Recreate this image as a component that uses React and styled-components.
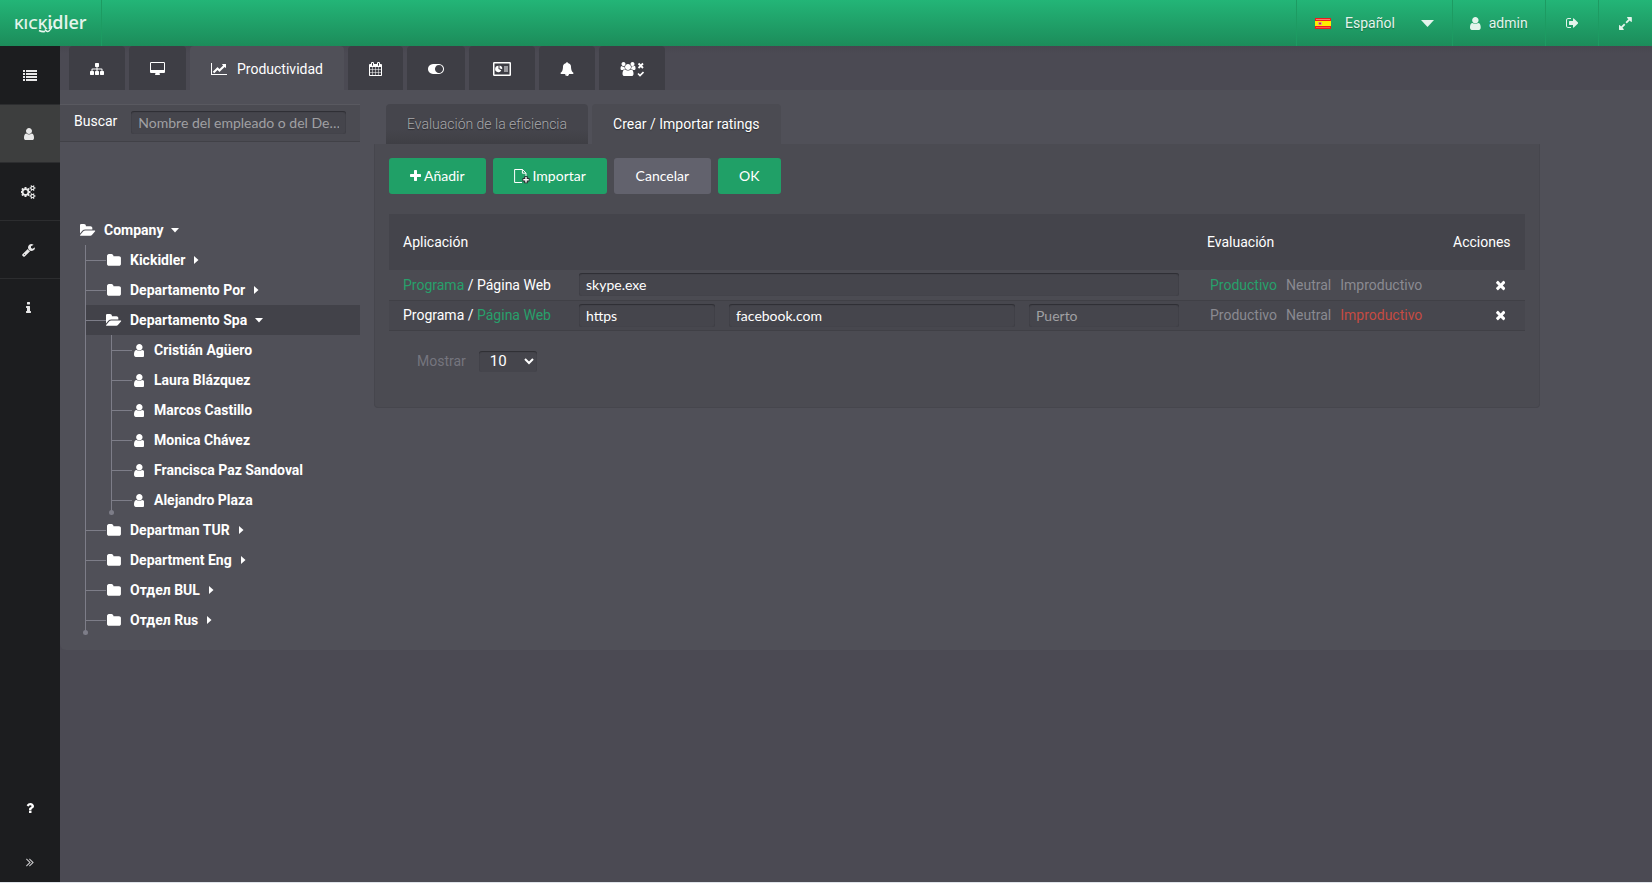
import React, { useState } from 'react';
import styled, { createGlobalStyle } from 'styled-components';

const GlobalStyle = createGlobalStyle`
  * {
    box-sizing: border-box;
  }
  body {
    margin: 0;
    background: #dfe4ea;
    color: #fff;
    font-family: Roboto, "Liberation Sans", sans-serif;
    font-size: 14px;
    line-height: 20px;
  }
  button, input, select {
    font: inherit;
    color: inherit;
  }
  button {
    padding: 0;
    border: none;
    background: none;
    cursor: pointer;
  }
  ul {
    margin: 0;
    padding: 0;
    list-style: none;
  }
  a {
    color: inherit;
    text-decoration: none;
  }
`;

// x offset, width and path of each glyph, all of them 1792 units high
const glyphs = {
  user: [256, 1280, "M1536 1399q0 109-62.5 187t-150.5 78h-854q-88 0-150.5-78t-62.5-187q0-85 8.5-160.5t31.5-152 58.5-131 94-89 134.5-34.5q131 128 313 128t313-128q76 0 134.5 34.5t94 89 58.5 131 31.5 152 8.5 160.5zm-256-887q0 159-112.5 271.5t-271.5 112.5-271.5-112.5-112.5-271.5 112.5-271.5 271.5-112.5 271.5 112.5 112.5 271.5z"],
  folder: [64, 1664, "M1728 608v704q0 92-66 158t-158 66h-1216q-92 0-158-66t-66-158v-960q0-92 66-158t158-66h320q92 0 158 66t66 158v32h672q92 0 158 66t66 158z"],
  folderOpen: [0, 1820, "M1815 952q0 31-31 66l-336 396q-43 51-120.5 86.5t-143.5 35.5h-1088q-34 0-60.5-13t-26.5-43q0-31 31-66l336-396q43-51 120.5-86.5t143.5-35.5h1088q34 0 60.5 13t26.5 43zm-343-344v160h-832q-94 0-197 47.5t-164 119.5l-337 396-5 6q0-4-.5-12.5t-.5-12.5v-960q0-92 66-158t158-66h320q92 0 158 66t66 158v32h544q92 0 158 66t66 158z"],
  times: [300, 1192, "M1490 1322q0 40-28 68l-136 136q-28 28-68 28t-68-28l-294-294-294 294q-28 28-68 28t-68-28l-136-136q-28-28-28-68t28-68l294-294-294-294q-28-28-28-68t28-68l136-136q28-28 68-28t68 28l294 294 294-294q28-28 68-28t68 28l136 136q28 28 28 68t-28 68l-294 294 294 294q28 28 28 68z"],
  plus: [192, 1408, "M1600 736v192q0 40-28 68t-68 28h-416v416q0 40-28 68t-68 28h-192q-40 0-68-28t-28-68v-416h-416q-40 0-68-28t-28-68v-192q0-40 28-68t68-28h416v-416q0-40 28-68t68-28h192q40 0 68 28t28 68v416h416q40 0 68 28t28 68z"],
  list: [0, 1792, "M0 256h256v256h-256zM384 256h1408v256h-1408zM0 640h256v256h-256zM384 640h1408v256h-1408zM0 1024h256v256h-256zM384 1024h1408v256h-1408zM0 1408h256v256h-256zM384 1408h1408v256h-1408z"],
  sitemap: [0, 1792, "M1792 1248v320q0 40-28 68t-68 28h-320q-40 0-68-28t-28-68v-320q0-40 28-68t68-28h96v-192h-512v192h96q40 0 68 28t28 68v320q0 40-28 68t-68 28h-320q-40 0-68-28t-28-68v-320q0-40 28-68t68-28h96v-192h-512v192h96q40 0 68 28t28 68v320q0 40-28 68t-68 28h-320q-40 0-68-28t-28-68v-320q0-40 28-68t68-28h96v-192q0-52 38-90t90-38h512v-192h-96q-40 0-68-28t-28-68v-320q0-40 28-68t68-28h320q40 0 68 28t28 68v320q0 40-28 68t-68 28h-96v192h512q52 0 90 38t38 90v192h96q40 0 68 28t28 68z"],
  desktop: [-64, 1920, "M1728 992v-832q0-13-9.5-22.5t-22.5-9.5h-1600q-13 0-22.5 9.5t-9.5 22.5v832q0 13 9.5 22.5t22.5 9.5h1600q13 0 22.5-9.5t9.5-22.5zm128-832v1088q0 66-47 113t-113 47h-544q0 37 16 77.5t32 71 16 43.5q0 26-19 45t-45 19h-512q-26 0-45-19t-19-45q0-14 16-44t32-70 16-78h-544q-66 0-113-47t-47-113v-1088q0-66 47-113t113-47h1600q66 0 113 47t47 113z"],
  chart: [0, 2048, "M2048 1536v128h-2048v-1536h128v1408h1920zm-128-1248v435q0 21-19.5 29.5t-35.5-7.5l-121-121-633 633q-10 10-23 10t-23-10l-233-233-416 416-192-192 585-585q10-10 23-10t23 10l233 233 464-464-121-121q-16-16-7.5-35.5t29.5-19.5h435q14 0 23 9t9 23z"],
  calendar: [64, 1664, "M192 1664h288v-288h-288v288zm352 0h320v-288h-320v288zm-352-352h288v-320h-288v320zm352 0h320v-320h-320v320zm-352-384h288v-288h-288v288zm736 736h320v-288h-320v288zm-384-736h320v-288h-320v288zm768 736h288v-288h-288v288zm-384-352h320v-320h-320v320zm-352-864v-288q0-13-9.5-22.5t-22.5-9.5h-64q-13 0-22.5 9.5t-9.5 22.5v288q0 13 9.5 22.5t22.5 9.5h64q13 0 22.5-9.5t9.5-22.5zm736 864h288v-320h-288v320zm-384-384h320v-288h-320v288zm384 0h288v-288h-288v288zm32-480v-288q0-13-9.5-22.5t-22.5-9.5h-64q-13 0-22.5 9.5t-9.5 22.5v288q0 13 9.5 22.5t22.5 9.5h64q13 0 22.5-9.5t9.5-22.5zm384-64v1280q0 52-38 90t-90 38h-1408q-52 0-90-38t-38-90v-1280q0-52 38-90t90-38h128v-96q0-66 47-113t113-47h64q66 0 113 47t47 113v96h384v-96q0-66 47-113t113-47h64q66 0 113 47t47 113v96h128q52 0 90 38t38 90z"],
  toggle: [0, 2048, "M0 896q0-130 51-248.5t136.5-204 204-136.5 248.5-51h768q130 0 248.5 51t204 136.5 136.5 204 51 248.5-51 248.5-136.5 204-204 136.5-248.5 51h-768q-130 0-248.5-51t-204-136.5-136.5-204-51-248.5zm1408 512q104 0 198.5-40.5t163.5-109.5 109.5-163.5 40.5-198.5-40.5-198.5-109.5-163.5-163.5-109.5-198.5-40.5-198.5 40.5-163.5 109.5-109.5 163.5-40.5 198.5 40.5 198.5 109.5 163.5 163.5 109.5 198.5 40.5z"],
  bell: [0, 1792, "M912 1696q0-16-16-16-59 0-101.5-42.5t-42.5-101.5q0-16-16-16t-16 16q0 73 51.5 124.5t124.5 51.5q16 0 16-16zm816-288q0 52-38 90t-90 38h-448q0 106-75 181t-181 75-181-75-75-181h-448q-52 0-90-38t-38-90q50-42 91-88t85-119.5 74.5-158.5 50-206 19.5-260q0-152 117-282.5t307-158.5q-8-19-8-39 0-40 28-68t68-28 68 28 28 68q0 20-8 39 190 28 307 158.5t117 282.5q0 139 19.5 260t50 206 74.5 158.5 85 119.5 91 88z"],
  cogs: [0, 1920, "M832 896q0-106-75-181t-181-75-181 75-75 181 75 181 181 75 181-75 75-181zm768 512q0-52-38-90t-90-38-90 38-38 90q0 53 37.5 90.5t90.5 37.5 90.5-37.5 37.5-90.5zm0-1024q0-52-38-90t-90-38-90 38-38 90q0 53 37.5 90.5t90.5 37.5 90.5-37.5 37.5-90.5zm-384 421v185q0 10-7 19.5t-16 10.5l-155 24q-11 35-32 76 34 48 90 115 7 11 7 20 0 12-7 19-23 30-82.5 89.5t-78.5 59.5q-11 0-21-7l-115-90q-37 19-77 31-11 108-23 155-7 24-30 24h-186q-11 0-20-7.5t-10-17.5l-23-153q-34-10-75-31l-118 89q-7 7-20 7-11 0-21-8-144-133-144-160 0-9 7-19 10-14 41-53t47-61q-23-44-35-82l-152-24q-10-1-17-9.5t-7-19.5v-185q0-10 7-19.5t16-10.5l155-24q11-35 32-76-34-48-90-115-7-11-7-20 0-12 7-20 22-30 82-89t79-59q11 0 21 7l115 90q34-18 77-32 11-108 23-154 7-24 30-24h186q11 0 20 7.5t10 17.5l23 153q34 10 75 31l118-89q8-7 20-7 11 0 21 8 144 133 144 160 0 8-7 19-12 16-42 54t-45 60q23 48 34 82l152 23q10 2 17 10.5t7 19.5zm640 533v140q0 16-149 31-12 27-30 52 51 113 51 138 0 4-4 7-122 71-124 71-8 0-46-47t-52-68q-20 2-30 2t-30-2q-14 21-52 68t-46 47q-2 0-124-71-4-3-4-7 0-25 51-138-18-25-30-52-149-15-149-31v-140q0-16 149-31 13-29 30-52-51-113-51-138 0-4 4-7 4-2 35-20t59-34 30-16q8 0 46 46.5t52 67.5q20-2 30-2t30 2q51-71 92-112l6-2q4 0 124 70 4 3 4 7 0 25-51 138 17 23 30 52 149 15 149 31zm0-1024v140q0 16-149 31-12 27-30 52 51 113 51 138 0 4-4 7-122 71-124 71-8 0-46-47t-52-68q-20 2-30 2t-30-2q-14 21-52 68t-46 47q-2 0-124-71-4-3-4-7 0-25 51-138-18-25-30-52-149-15-149-31v-140q0-16 149-31 13-29 30-52-51-113-51-138 0-4 4-7 4-2 35-20t59-34 30-16q8 0 46 46.5t52 67.5q20-2 30-2t30 2q51-71 92-112l6-2q4 0 124 70 4 3 4 7 0 25-51 138 17 23 30 52 149 15 149 31z"],
  wrench: [64, 1664, "M448 1472q0-26-19-45t-45-19-45 19-19 45 19 45 45 19 45-19 19-45zm644-420l-682 682q-37 37-90 37-52 0-91-37l-106-108q-38-36-38-90 0-53 38-91l681-681q39 98 114.5 173.5t173.5 114.5zm634-435q0 39-23 106-47 134-164.5 217.5t-258.5 83.5q-185 0-316.5-131.5t-131.5-316.5 131.5-316.5 316.5-131.5q58 0 121.5 16.5t107.5 46.5q16 11 16 28t-16 28l-293 169v224l193 107q5-3 79-48.5t135.5-81 70.5-35.5q15 0 23.5 10t8.5 25z"],
  info: [576, 640, "M1216 1344v128q0 26-19 45t-45 19h-512q-26 0-45-19t-19-45v-128q0-26 19-45t45-19h64v-384h-64q-26 0-45-19t-19-45v-128q0-26 19-45t45-19h384q26 0 45 19t19 45v576h64q26 0 45 19t19 45zm-128-1152v192q0 26-19 45t-45 19h-256q-26 0-45-19t-19-45v-192q0-26 19-45t45-19h256q26 0 45 19t19 45z"],
  question: [384, 1024, "M1088 1256v240q0 16-12 28t-28 12h-240q-16 0-28-12t-12-28v-240q0-16 12-28t28-12h240q16 0 28 12t12 28zm316-600q0 54-15.5 101t-35 76.5-55 59.5-57.5 43.5-61 35.5q-41 23-68.5 65t-27.5 67q0 17-12 32.5t-28 15.5h-240q-15 0-25.5-18.5t-10.5-37.5v-45q0-83 65-156.5t143-108.5q59-27 84-56t25-76q0-42-46.5-74t-107.5-32q-65 0-108 29-35 25-107 115-13 16-31 16-12 0-25-8l-164-125q-13-10-15.5-25t5.500-28q160-266 464-266 80 0 161 31t146 83 106 127.5 41 158.5z"],
  more: [384, 1024, "M979 960q0 13-10 23l-466 466q-10 10-23 10t-23-10l-50-50q-10-10-10-23t10-23l393-393-393-393q-10-10-10-23t10-23l50-50q10-10 23-10t23 10l466 466q10 10 10 23zm384 0q0 13-10 23l-466 466q-10 10-23 10t-23-10l-50-50q-10-10-10-23t10-23l393-393-393-393q-10-10-10-23t10-23l50-50q10-10 23-10t23 10l466 466q10 10 10 23z"],
  signOut: [64, 1600, "M704 1440q0 4 1 20t.5 26.5-3 23.5-10 19.5-20.5 6.5h-320q-119 0-203.5-84.5t-84.5-203.5v-704q0-119 84.5-203.5t203.5-84.5h320q13 0 22.5 9.5t9.5 22.5q0 4 1 20t.5 26.5-3 23.5-10 19.5-20.5 6.5h-320q-66 0-113 47t-47 113v704q0 66 47 113t113 47h312l11.5 1 11.5 3 8 5.500 7 9 2 13.500zm928-544q0 26-19 45l-544 544q-19 19-45 19t-45-19-19-45v-288h-448q-26 0-45-19t-19-45v-384q0-26 19-45t45-19h448v-288q0-26 19-45t45-19 45 19l544 544q19 19 19 45z"],
  expand: [128, 1536, "M883 1056q0 13-10 23l-332 332 144 144q19 19 19 45t-19 45-45 19h-448q-26 0-45-19t-19-45v-448q0-26 19-45t45-19 45 19l144 144 332-332q10-10 23-10t23 10l114 114q10 10 10 23zm781-864v448q0 26-19 45t-45 19-45-19l-144-144-332 332q-10 10-23 10t-23-10l-114-114q-10-10-10-23t10-23l332-332-144-144q-19-19-19-45t19-45 45-19h448q26 0 45 19t19 45z"],
  users: [0, 2048, "M657 896q-162 5-265 128h-134q-82 0-138-40.5t-56-118.5q0-353 124-353 6 0 43.5 21t97.5 42.5 119 21.5q67 0 133-23-5 37-5 66 0 159 90 294zm1071 637q0 120-73 189.5t-194 69.5h-874q-121 0-194-69.5t-73-189.5q0-53 3.5-103.5t14-109 26.5-108.5 43-97.5 62-81 85.5-53.5 111.5-20q10 0 43 21.5t73 48 107 48 135 21.5 135-21.5 107-48 73-48 43-21.5q61 0 111.5 20t85.5 53.5 62 81 43 97.5 26.5 108.5 14 109 3.5 103.5zm-1024-1277q0 106-75 181t-181 75-181-75-75-181 75-181 181-75 181 75 75 181zm704 384q0 159-112.5 271.5t-271.5 112.5-271.5-112.5-112.5-271.5 112.5-271.5 271.5-112.5 271.5 112.5 112.5 271.5zm576 225q0 78-56 118.5t-138 40.5h-134q-103-123-265-128 90-135 90-294 0-29-5-66 66 23 133 23 59 0 119-21.5t97.5-42.5 43.5-21q124 0 124 353zm-128-609q0 106-75 181t-181 75-181-75-75-181 75-181 181-75 181 75 75 181z"],
};

const Icon = ({ name, size = 14 }) => {
  const [x, w, d] = glyphs[name];
  return (
    <svg viewBox={`${x} 0 ${w} 1792`} width={(w / 1792) * size} height={size} fill="currentColor" aria-hidden="true">
      <path d={d} />
    </svg>
  );
};

const CardIcon = () => (
  <svg width="24" height="14" viewBox="0 0 24 14" aria-hidden="true">
    <rect x="3.75" y="0.75" width="16.5" height="12.5" rx="0.5" fill="none" stroke="#fff" strokeWidth="1.5" />
    <path d="M8.500 3.800a3.200 3.200 0 1 0 2.800 4.400L8.500 7z" fill="#fff" />
    <path d="M9.500 3.500v2.700l2.700 1A3.300 3.300 0 0 0 9.500 3.500z" fill="#fff" />
    <rect x="14" y="4" width="4" height="6" fill="#9b9ba0" />
  </svg>
);

const UsersIcon = () => (
  <svg width="24" height="16" viewBox="0 0 24 16" aria-hidden="true">
    <svg x="0" y="1" width="16" height="14" viewBox="0 0 2048 1792" fill="#fff">
      <path d={glyphs.users[2]} />
    </svg>
    <path d="M18.500 2.500l4.500 4.500m0-4.500l-4.500 4.500" stroke="#fff" strokeWidth="1.800" />
    <path d="M18 12.500l2 2 3.500-3.500" fill="none" stroke="#fff" strokeWidth="1.600" />
  </svg>
);

const ImportIcon = () => (
  <svg width="16" height="16" viewBox="0 0 16 16" fill="none" aria-hidden="true">
    <path d="M8 14.500H.6V1.500h7.900l3.500 3.600V8M8.400 1.500v3.700H12" stroke="#fff" />
    <path d="M12 8.200v7M8.500 11.700h7" stroke="#2c2c30" strokeWidth="3.600" />
    <path d="M12 9v5.400M9.300 11.700h5.400" stroke="#fff" strokeWidth="1.400" />
  </svg>
);

const Flag = () => (
  <svg width="16" height="11" viewBox="0 0 16 11" aria-hidden="true">
    <rect width="16" height="11" fill="#ee1c1c" />
    <path d="M1 1.500h14" stroke="#ff7b6b" />
    <rect y="3" width="16" height="5" fill="#ffee00" />
    <path d="M1 9.500h14" stroke="#f4574d" />
    <rect x="3" y="4" width="4" height="3" fill="#e8a08a" />
    <circle cx="5" cy="5.500" r="1" fill="#d2232a" />
  </svg>
);

const Caret = ({ open, big }) => (
  big
    ? <svg width="13" height="7" viewBox="0 0 13 7" fill="currentColor" aria-hidden="true"><path d="M0 0h13L6.500 7z" /></svg>
    : <svg width="8" height="8" viewBox="0 0 8 8" fill="currentColor" aria-hidden="true">
        <path d={open ? "M0 2h8L4 6.500z" : "M1 0v8l4.500-4z"} />
      </svg>
);

const sideItems = [
  { icon: "list", label: "Resumen" },
  { icon: "user", label: "Empleados" },
  { icon: "cogs", label: "Ajustes" },
  { icon: "wrench", label: "Herramientas" },
  { icon: "info", label: "Información" },
];

const topTabs = [
  { label: "Estructura", icon: <Icon name="sitemap" /> },
  { label: "Pantallas", icon: <Icon name="desktop" /> },
  { label: "Productividad", icon: <Icon name="chart" />, active: true },
  { label: "Calendario", icon: <Icon name="calendar" /> },
  { label: "Estado", icon: <Icon name="toggle" /> },
  { label: "Informes", icon: <CardIcon /> },
  { label: "Avisos", icon: <Icon name="bell" /> },
  { label: "Grupos", icon: <UsersIcon /> },
];

const departments = [
  { name: "Kickidler" },
  { name: "Departamento Por" },
  {
    name: "Departamento Spa",
    people: ["Cristián Agüero", "Laura Blázquez", "Marcos Castillo", "Monica Chávez", "Francisca Paz Sandoval", "Alejandro Plaza"],
  },
  { name: "Departman TUR" },
  { name: "Department Eng" },
  { name: "Отдел BUL" },
  { name: "Отдел Rus" },
];

const ratings = ["Productivo", "Neutral", "Improductivo"];

const App = () => {
  const [rows, setRows] = useState([
    { id: 1, type: "program", rating: "Productivo" },
    { id: 2, type: "web", rating: "Improductivo" },
  ]);

  const update = (id, change) => {
    setRows(rows.map((r) => (r.id === id ? { ...r, ...change } : r)));
  };

  return (
    <>
      <GlobalStyle />
      <Page>
        <Header>
          <Logo href="#" aria-label="Kickidler">
            <small>KICK</small>idler
            <svg width="16" height="9" viewBox="0 0 16 9" aria-hidden="true">
              <path d="M1 6.500q3 1.500 6 1M7 5.500q2 3 4 1.500t3-5" fill="none" stroke="#e9f7f0" strokeWidth="1.500" />
            </svg>
          </Logo>
          <HeaderCell as="label" $pad="18px">
            <Flag />
            <LangSelect aria-label="Idioma" defaultValue="es">
              <option value="es">Español</option>
            </LangSelect>
            <Caret big />
          </HeaderCell>
          <HeaderCell $pad="17px">
            <Icon name="user" size={15} />
            admin
          </HeaderCell>
          <HeaderCell $pad="20px" aria-label="Salir"><Icon name="signOut" /></HeaderCell>
          <HeaderCell $pad="20px" aria-label="Pantalla completa"><Icon name="expand" size={15} /></HeaderCell>
        </Header>

        <Body>
          <Sidebar>
            {sideItems.map((item) => (
              <SideItem href="#" key={item.icon} aria-label={item.label} $active={item.icon === "user"}>
                <Icon name={item.icon} />
              </SideItem>
            ))}
            <SideBottom>
              <SideButton aria-label="Ayuda"><Icon name="question" /></SideButton>
              <SideButton aria-label="Expandir"><Icon name="more" /></SideButton>
            </SideBottom>
          </Sidebar>

          <Main>
            <TopTabs>
              {topTabs.map((tab) => (
                <TopTab key={tab.label} $active={tab.active} aria-label={tab.label}>
                  {tab.icon}
                  {tab.active && tab.label}
                </TopTab>
              ))}
            </TopTabs>

            <Content>
              <TreeColumn>
                <SearchBar>
                  <label htmlFor="search">Buscar</label>
                  <Field id="search" $grow placeholder="Nombre del empleado o del De…" />
                </SearchBar>
                <Tree>
                  <Node>
                    <IconBox><Icon name="folderOpen" size={15} /></IconBox>
                    <span>Company</span>
                    <Caret open />
                  </Node>
                  <Branch>
                    {departments.map((dep) => (
                      <li key={dep.name}>
                        <Node $line $selected={!!dep.people}>
                          <IconBox><Icon name={dep.people ? "folderOpen" : "folder"} size={15} /></IconBox>
                          <span>{dep.name}</span>
                          <Caret open={!!dep.people} />
                        </Node>
                        {dep.people && (
                          <Branch>
                            {dep.people.map((name) => (
                              <li key={name}>
                                <Node $line>
                                  <IconBox $person><Icon name="user" size={15} /></IconBox>
                                  <span>{name}</span>
                                </Node>
                              </li>
                            ))}
                          </Branch>
                        )}
                      </li>
                    ))}
                  </Branch>
                </Tree>
              </TreeColumn>

              <Work>
                <SubTabs>
                  <SubTab>Evaluación de la eficiencia</SubTab>
                  <SubTab $active>Crear / Importar ratings</SubTab>
                </SubTabs>
                <Panel>
                  <Actions>
                    <Button><Icon name="plus" />Añadir</Button>
                    <Button><ImportIcon />Importar</Button>
                    <Button $grey>Cancelar</Button>
                    <Button>OK</Button>
                  </Actions>

                  <Table>
                    <thead>
                      <tr>
                        <th>Aplicación</th>
                        <th>Evaluación</th>
                        <th>Acciones</th>
                      </tr>
                    </thead>
                    <tbody>
                      {rows.map((row) => (
                        <tr key={row.id}>
                          <td>
                            <AppCell>
                              <TypeSwitch>
                                <Choice $color={row.type === "program" ? "#27a06b" : "#fff"} onClick={() => update(row.id, { type: "program" })}>Programa</Choice>
                                {" / "}
                                <Choice $color={row.type === "web" ? "#27a06b" : "#fff"} onClick={() => update(row.id, { type: "web" })}>Página Web</Choice>
                              </TypeSwitch>
                              {row.type === "program" ? (
                                <Field $grow aria-label="Programa" defaultValue="skype.exe" />
                              ) : (
                                <>
                                  <Field $width="136px" aria-label="Protocolo" defaultValue="https" />
                                  <Field $grow aria-label="Dominio" defaultValue="facebook.com" />
                                  <Field $width="150px" aria-label="Puerto" placeholder="Puerto" />
                                </>
                              )}
                            </AppCell>
                          </td>
                          <td>
                            <Ratings>
                              {ratings.map((name) => (
                                <Choice
                                  key={name}
                                  $color={row.rating !== name ? "#8a8a91" : name === "Improductivo" ? "#c54b42" : "#27a06b"}
                                  onClick={() => update(row.id, { rating: name })}
                                >
                                  {name}
                                </Choice>
                              ))}
                            </Ratings>
                          </td>
                          <td>
                            <Remove aria-label="Eliminar" onClick={() => setRows(rows.filter((r) => r.id !== row.id))}>
                              <Icon name="times" />
                            </Remove>
                          </td>
                        </tr>
                      ))}
                    </tbody>
                  </Table>

                  <Pager>
                    <label htmlFor="limit">Mostrar</label>
                    <Limit id="limit" defaultValue="10">
                      <option>10</option>
                      <option>25</option>
                      <option>50</option>
                    </Limit>
                  </Pager>
                </Panel>
              </Work>
            </Content>
          </Main>
        </Body>
      </Page>
    </>
  );
};

const Page = styled.div`
  display: flex;
  flex-direction: column;
  min-height: calc(100vh - 1px);
  background: #4b4a53;
`;

const Header = styled.header`
  display: flex;
  height: 46px;
  background: linear-gradient(#23b577, #1c8c5a);
  color: #e4f4ec;
  text-shadow: 0 1px 1px rgba(0, 0, 0, 0.3);
`;

const Logo = styled.a`
  position: relative;
  width: 102px;
  margin-right: auto;
  padding-left: 14px;
  border-right: 1px solid #1d9b62;
  font: 600 18px/44px "Open Sans", sans-serif;
  text-shadow: none;
  white-space: nowrap;

  small {
    font-size: 15px;
  }
  svg {
    position: absolute;
    left: 38px;
    top: 24px;
  }
`;

const HeaderCell = styled.button`
  display: flex;
  align-items: center;
  gap: 8px;
  padding: 0 ${(p) => p.$pad};
  border-left: 1px solid #1d9b62;
  text-shadow: inherit;
`;

const LangSelect = styled.select`
  width: 66px;
  margin: 0 2px 0 6px;
  padding: 0;
  border: none;
  background: none;
  appearance: none;
  text-shadow: inherit;
`;

const Body = styled.div`
  display: flex;
  flex: 1;
`;

const Sidebar = styled.nav`
  display: flex;
  flex-direction: column;
  width: 60px;
  background: #1c1d1f;
`;

const SideItem = styled.a`
  display: flex;
  align-items: center;
  justify-content: center;
  height: 58px;
  padding-right: 3px;
  border-top: 1px solid #2c2d2f;
  background: ${(p) => (p.$active ? "#3d3e3e" : "none")};
  color: #e8e8e8;

  &:first-child {
    padding-right: 0;
    border-top: none;
  }
`;

const SideBottom = styled.div`
  margin-top: auto;
`;

const SideButton = styled.button`
  display: flex;
  align-items: center;
  justify-content: center;
  width: 100%;
  height: 68px;

  &:last-child {
    height: 40px;
    color: #c8c8ca;
  }
`;

const Main = styled.main`
  flex: 1;
  min-width: 0;
`;

const TopTabs = styled.div`
  display: flex;
  gap: 4px;
  height: 44px;
  padding-left: 9px;
  background: linear-gradient(#47464f, #4b4a53 8px);
`;

const TopTab = styled.button`
  display: flex;
  align-items: center;
  gap: 10px;
  padding: 2px 21px 0;
  border-radius: 4px 4px 0 0;
  background: ${(p) => (p.$active ? "#505058" : "#3e3e45")};
`;

const Content = styled.div`
  display: flex;
  gap: 14px;
  padding: 14px 112px 15px 0;
  border-radius: 0 0 0 6px;
  background: #505058;
`;

const TreeColumn = styled.aside`
  width: 300px;
`;

const SearchBar = styled.div`
  display: flex;
  gap: 14px;
  height: 38px;
  padding: 6px 14px 0;
  border-top: 1px solid #595960;
  border-bottom: 1px solid #414147;
  background: #4b4b52;
`;

const Field = styled.input`
  flex: ${(p) => (p.$grow ? "1" : "none")};
  width: ${(p) => p.$width || "auto"};
  min-width: 0;
  height: 23px;
  padding: 0 7px;
  border: none;
  border-radius: 3px;
  background: #45454c;
  box-shadow: inset 0 1px 1px #2e2e33, inset 0 0 1px #3a3a40;
  font-family: Lato, sans-serif;
  font-size: 14px;

  &::placeholder {
    color: #a0a0a3;
  }
`;

const Tree = styled.div`
  padding-top: 73px;
`;

const Node = styled.button`
  display: flex;
  align-items: center;
  gap: 8px;
  width: 100%;
  height: 30px;
  padding-left: ${(p) => (p.$line ? "0" : "20px")};
  background: ${(p) => (p.$selected ? "#424249" : "none")};
  font-weight: 700;
  text-align: left;

  &::before {
    content: "";
    display: ${(p) => (p.$line ? "block" : "none")};
    width: 20px;
    margin-right: -8px;
    border-top: 1px solid #7d7d88;
  }
`;

const IconBox = styled.span`
  display: flex;
  justify-content: center;
  width: ${(p) => (p.$person ? "14px" : "16px")};
`;

const Branch = styled.ul`
  position: relative;
  margin-left: 25px;
  border-left: 1px solid #7d7d88;

  &::after {
    content: "";
    position: absolute;
    left: -3px;
    bottom: 0;
    width: 5px;
    height: 5px;
    border-radius: 50%;
    background: #7d7d88;
  }
`;

const Work = styled.section`
  flex: 1;
  min-width: 0;
`;

const SubTabs = styled.div`
  display: flex;
  gap: 4px;
  padding-left: 12px;
`;

const SubTab = styled.button`
  height: 40px;
  padding: 0 21px;
  border-radius: 4px 4px 0 0;
  background: ${(p) => (p.$active ? "#4b4b52" : "linear-gradient(#45454c 65%, #3f3f45)")};
  color: ${(p) => (p.$active ? "#fff" : "#a8a8ab")};
  font-weight: ${(p) => (p.$active ? "400" : "300")};
  text-shadow: 0 1px 1px rgba(0, 0, 0, 0.4);
`;

const Panel = styled.div`
  min-height: 264px;
  padding: 13px 14px 0;
  border: 1px solid #46464d;
  border-top-color: #4b4b52;
  border-radius: 0 0 4px 4px;
  background: #4b4b52;
`;

const Actions = styled.div`
  display: flex;
  gap: 7px;
  margin-bottom: 20px;
`;

const Button = styled.button`
  display: flex;
  align-items: center;
  justify-content: center;
  gap: 3px;
  min-width: ${(p) => (p.$grey ? "97px" : "63px")};
  height: 36px;
  padding: 0 21px;
  border-radius: 3px;
  background: ${(p) => (p.$grey ? "#62626d" : "#20a067")};
  font-family: Lato, sans-serif;
  font-size: 14px;
`;

const Table = styled.table`
  width: 100%;
  border-collapse: collapse;
  table-layout: fixed;

  th {
    height: 56px;
    padding: 0 14px;
    background: #44444b;
    font-weight: 400;
    text-align: left;
  }
  th:nth-child(2) {
    width: 246px;
  }
  th:nth-child(3) {
    width: 86px;
  }
  td {
    height: 30px;
    padding: 0 14px;
    border-bottom: 1px solid #404046;
  }
  tbody tr:nth-child(even) {
    background: #47474e;
  }
`;

const AppCell = styled.div`
  display: flex;
  align-items: center;
  gap: 14px;
`;

const TypeSwitch = styled.div`
  width: 162px;
  white-space: nowrap;
`;

const Choice = styled.button`
  color: ${(p) => p.$color};
`;

const Ratings = styled.div`
  display: flex;
  gap: 9px;
  padding-left: 3px;
`;

const Remove = styled.button`
  display: flex;
  margin-left: auto;
  padding-right: 6px;
`;

const Pager = styled.div`
  display: flex;
  align-items: center;
  gap: 13px;
  margin-top: 20px;
  padding-left: 28px;
  color: #75757e;
`;

const Limit = styled.select`
  width: 58px;
  height: 21px;
  padding: 0 7px;
  border: none;
  border-radius: 3px;
  background: #45454c;
  box-shadow: inset 0 1px 1px #2e2e33;
  color: #fff;
  font-size: 15px;
`;

export default App;
